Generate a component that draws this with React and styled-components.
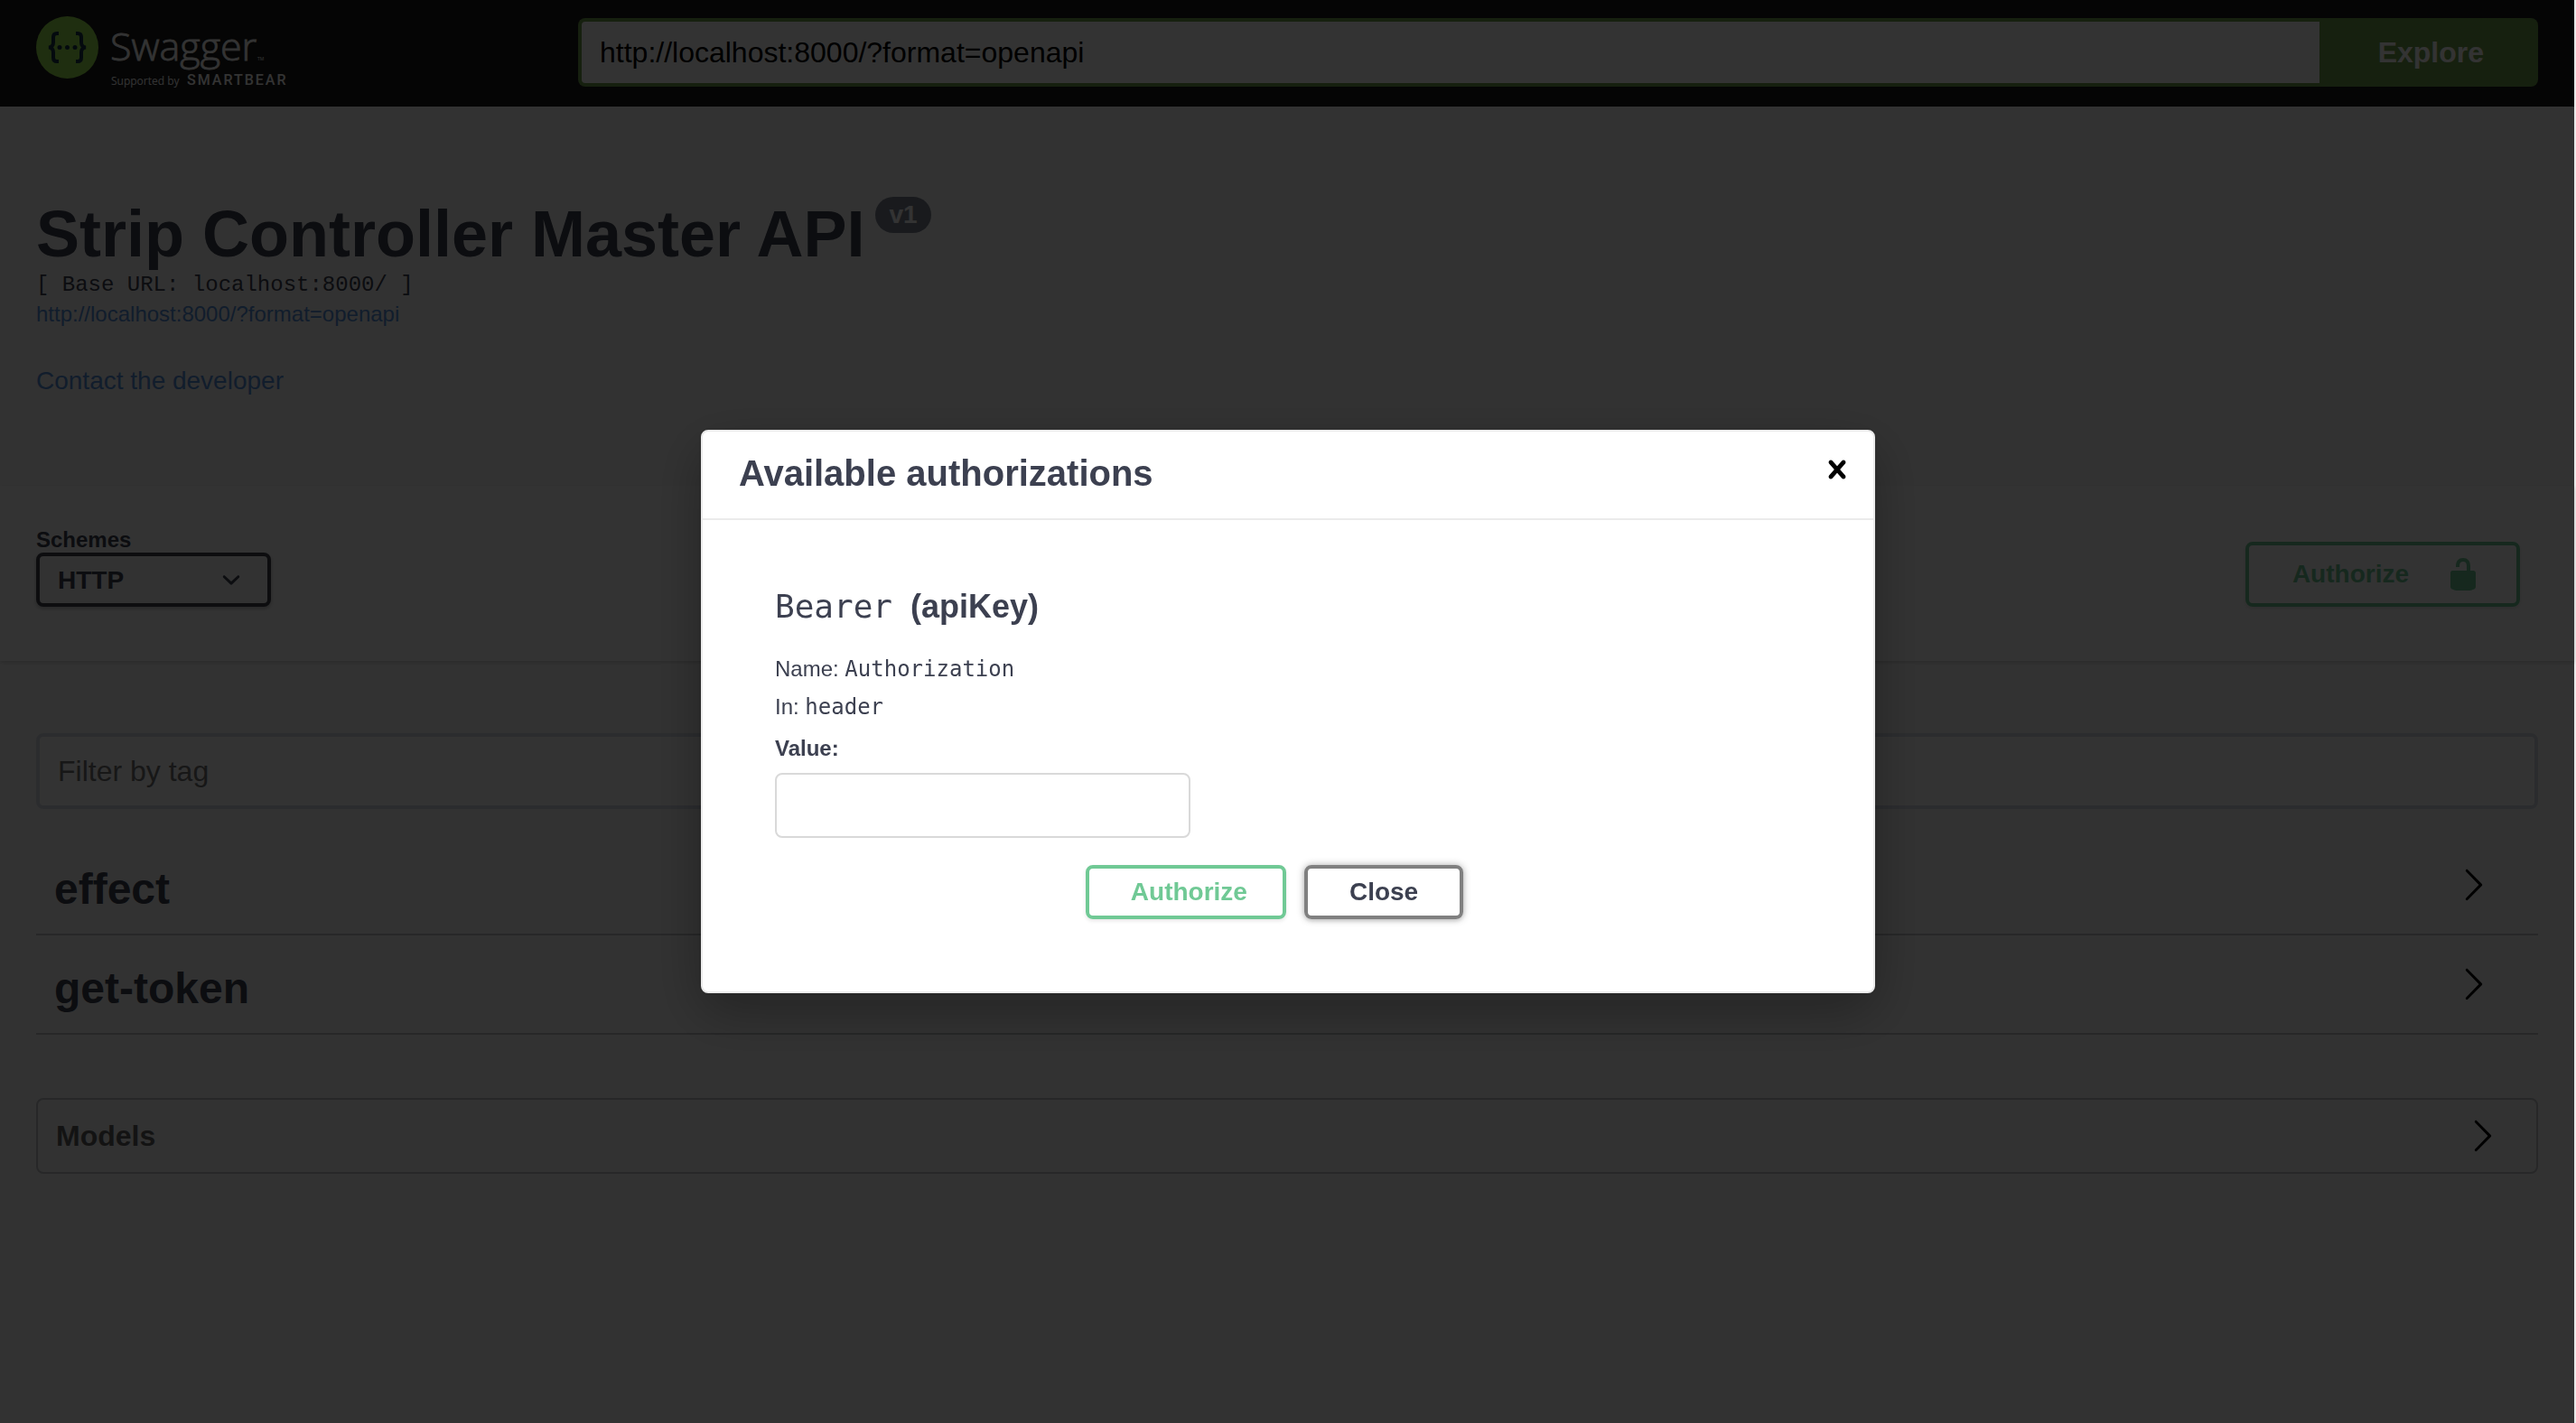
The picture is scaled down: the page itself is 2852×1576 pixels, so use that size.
import React from "react";
import styled, { createGlobalStyle, css } from "styled-components";

const ink = "#3c4050";
const green = "#70c995";
const leaf = "#719f4a";
const line = "rgba(59, 65, 81, 0.3)";
const sans = `"Liberation Sans", Arial, Helvetica, sans-serif`;
const courier = `"Liberation Mono", "Courier New", monospace`;
const mono = `"DejaVu Sans Mono", Menlo, monospace`;

const GlobalStyle = createGlobalStyle`
  *, *::before, *::after { box-sizing: border-box; }
  body { margin: 0; background: #fafafa; color: ${ink}; font-family: ${sans}; }
  h2, h3, h4, p { margin: 0; }
  button, input, select { font-family: inherit; margin: 0; }
`;

const Page = styled.div`
  min-height: 100vh;
  border-right: 2px solid #e8e8e8;
`;

const Topbar = styled.header`
  display: flex;
  justify-content: space-between;
  align-items: flex-start;
  padding: 20px 40px 22px;
  background: #1b1b1b;
`;

const LogoLink = styled.a`
  display: block;
  flex: 0 0 600px;
  height: 76px;
  svg { display: block; overflow: visible; }
`;

const UrlForm = styled.form`
  display: flex;
  flex: 1;
`;

const UrlInput = styled.input`
  flex: 1;
  min-width: 0;
  height: 76px;
  padding: 0 20px;
  border: 4px solid ${leaf};
  border-right: 0;
  border-radius: 8px 0 0 8px;
  background: #fff;
  color: #000;
  font-size: 32px;
`;

const ExploreButton = styled.button`
  height: 76px;
  padding: 0 60px 0 65px;
  border: 0;
  border-radius: 0 8px 8px 0;
  background: ${leaf};
  color: #fff;
  font-size: 32px;
  font-weight: 700;
`;

const Info = styled.section`
  display: flex;
  flex-direction: column;
  align-items: flex-start;
  padding: 100px 40px;
`;

const TitleRow = styled.div`
  display: flex;
  align-items: flex-start;
  gap: 12px;
`;

const Title = styled.h2`
  font-size: 72px;
  line-height: 82px;
`;

const Version = styled.span`
  padding: 0 15px;
  border-radius: 20px;
  background: #7d8492;
  color: #fff;
  font-size: 28px;
  font-weight: 700;
  line-height: 40px;
`;

const BaseUrl = styled.pre`
  margin: 0;
  font-family: ${courier};
  font-size: 24px;
  line-height: 32px;
`;

const TextLink = styled.a`
  color: #588fdb;
  font-size: ${(p) => p.$size}px;
  line-height: 32px;
  text-decoration: none;
`;

const Contact = styled.div`
  display: flex;
  margin-top: 42px;
`;

const SchemeBar = styled.section`
  display: flex;
  justify-content: space-between;
  align-items: flex-end;
  padding: 46px 60px 60px 40px;
  background: #fff;
  box-shadow: 0 2px 4px rgba(0, 0, 0, 0.15);
`;

const SchemeField = styled.div`
  display: flex;
  flex-direction: column;
`;

const SchemeLabel = styled.label`
  font-size: 24px;
  font-weight: 700;
  line-height: 28px;
`;

const SelectBox = styled.div`
  display: grid;
  align-items: center;
  width: 260px;
  > * { grid-area: 1 / 1; }
  svg { justify-self: end; margin-right: 24px; pointer-events: none; }
`;

const SchemeSelect = styled.select`
  appearance: none;
  height: 60px;
  padding: 0 60px 0 20px;
  border: 4px solid #41444e;
  border-radius: 8px;
  background: #f7f7f7;
  box-shadow: 0 2px 4px rgba(0, 0, 0, 0.25);
  color: ${ink};
  font-size: 28px;
  font-weight: 700;
`;

const Button = styled.button`
  display: flex;
  align-items: center;
  gap: 40px;
  height: ${(p) => (p.$tall ? 72 : 60)}px;
  padding: 0 39px 0 ${(p) => (p.$tall ? 48 : 46)}px;
  border: 4px solid ${green};
  border-radius: 8px;
  background: transparent;
  box-shadow: 0 2px 4px rgba(0, 0, 0, 0.1);
  color: ${green};
  font-size: 28px;
  font-weight: 700;
  ${(p) =>
    p.$neutral &&
    css`
      padding-right: 46px;
      border-color: #808080;
      color: ${ink};
      box-shadow: 0 2px 4px rgba(0, 0, 0, 0.1), 0 0 8px rgba(0, 0, 0, 0.3);
    `}
`;

const Main = styled.main`
  display: flex;
  flex-direction: column;
  padding: 80px 40px 0;
`;

const FilterInput = styled.input`
  width: 100%;
  height: 84px;
  margin-bottom: 40px;
  padding: 0 20px;
  border: 4px solid #d8dde7;
  border-radius: 8px;
  background: #fff;
  font-size: 32px;
  &::placeholder { color: #757575; opacity: 1; }
`;

const Tags = styled.div`
  display: flex;
  flex-direction: column;
  gap: 10px;
  margin-bottom: 70px;
`;

const TagHeader = styled.h3`
  display: flex;
  justify-content: space-between;
  align-items: center;
  padding: 20px 52px 20px 20px;
  border-bottom: 2px solid ${line};
  font-size: 48px;
  line-height: 58px;
`;

const ModelsHeader = styled.h4`
  display: flex;
  justify-content: space-between;
  align-items: center;
  height: 84px;
  padding: 0 40px 0 20px;
  border: 2px solid ${line};
  border-radius: 8px;
  color: #606060;
  font-size: 32px;
`;

const IconButton = styled.button`
  display: flex;
  padding: 0;
  border: 0;
  background: none;
  color: #000;
  margin-bottom: ${(p) => (p.$raised ? 10 : 0)}px;
`;

const Backdrop = styled.div`
  position: fixed;
  inset: 0 2px 0 0;
  background: rgba(0, 0, 0, 0.8);
`;

const DialogLayer = styled.div`
  position: fixed;
  inset: 0;
  display: flex;
  align-items: center;
  justify-content: center;
`;

const Dialog = styled.div`
  width: 1300px;
  max-width: 90%;
  border: 2px solid #ebebeb;
  border-radius: 8px;
  background: #fff;
  box-shadow: 0 20px 60px rgba(0, 0, 0, 0.3);
`;

const DialogHeader = styled.div`
  display: flex;
  justify-content: space-between;
  align-items: flex-start;
  padding: 22px 20px 26px 40px;
  border-bottom: 2px solid #ebebeb;
`;

const DialogTitle = styled.h3`
  font-size: 40px;
  line-height: 48px;
`;

const DialogBody = styled.form`
  padding: 74px 80px 80px;
`;

const AuthTitle = styled.h4`
  margin-bottom: 26px;
  font-size: 36px;
  line-height: 44px;
`;

const Code = styled.code`
  font-family: ${mono};
  font-size: inherit;
  font-weight: 400;
`;

const Row = styled.p`
  font-size: 24px;
  line-height: 42px;
`;

const ValueLabel = styled.label`
  display: block;
  margin: 4px 0 6px;
  font-size: 24px;
  font-weight: 700;
  line-height: 42px;
`;

const ValueInput = styled.input`
  display: block;
  width: 460px;
  height: 72px;
  padding: 0 20px;
  border: 2px solid #d9d9d9;
  border-radius: 8px;
  background: #fff;
  font-size: 28px;
`;

const Actions = styled.div`
  display: flex;
  justify-content: center;
  gap: 20px;
  margin-top: 30px;
  padding-right: 30px;
`;

const icons = {
  arrow:
    "M13.25 10L6.109 2.58c-.268-.27-.268-.707 0-.979.268-.27.701-.27.969 0l7.83 7.908c.268.271.268.709 0 .979l-7.83 7.908c-.268.271-.701.27-.969 0-.268-.269-.268-.707 0-.979L13.25 10z",
  unlocked:
    "M15.8 8H14V5.6C14 2.703 12.665 1 10 1 7.334 1 6 2.703 6 5.6V6h2v-.801C8 3.754 8.797 3 10 3c1.203 0 2 .754 2 2.199V8H4c-.553 0-1 .646-1 1.199V17c0 .549.428 1.139.951 1.307l1.197.387C5.672 18.861 6.55 19 7.1 19h5.8c.549 0 1.428-.139 1.951-.307l1.196-.387c.524-.167.953-.757.953-1.306V9.199C17 8.646 16.352 8 15.8 8z",
  close:
    "M14.348 14.849c-.469.469-1.229.469-1.697 0L10 11.819l-2.651 3.029c-.469.469-1.229.469-1.697 0-.469-.469-.469-1.229 0-1.697l2.758-3.15-2.759-3.152c-.469-.469-.469-1.228 0-1.697s1.228-.469 1.697 0L10 8.183l2.651-3.031c.469-.469 1.228-.469 1.697 0s.469 1.229 0 1.697l-2.758 3.152 2.758 3.15c.469.469.469 1.229 0 1.698z",
  chevron:
    "M13.418 7.859c.271-.268.709-.268.978 0 .27.268.272.701 0 .969l-3.908 3.83c-.27.268-.707.268-.979 0l-3.908-3.83c-.27-.267-.27-.701 0-.969.271-.268.709-.268.978 0L10 11l3.418-3.141z",
};

function Icon({ name }) {
  return (
    <svg width="40" height="40" viewBox="0 0 20 20" fill="currentColor" aria-hidden="true">
      <path d={icons[name]} />
    </svg>
  );
}

function Logo() {
  return (
    <svg width="290" height="76" viewBox="40 20 290 76" role="img" aria-label="Swagger, supported by SmartBear">
      <circle cx="74.500" cy="52.500" r="34.500" fill="#9de650" />
      <g fill="none" stroke="#173647" strokeWidth="4">
        <path d="M65 37h-2q-4 0-4 4v6q0 5-5 5.500q5 .5 5 5.500v6q0 4 4 4h2" />
        <path d="M84 37h2q4 0 4 4v6q0 5 5 5.500q-5 .5-5 5.500v6q0 4-4 4h-2" />
      </g>
      <g fill="#173647">
        <circle cx="66" cy="52.500" r="2.500" />
        <circle cx="74.500" cy="52.500" r="2.500" />
        <circle cx="83" cy="52.500" r="2.500" />
      </g>
      <g fill="#fff" fontFamily='"Open Sans", sans-serif'>
        <text x="122" y="67" fontSize="43" fontWeight="300" stroke="#fff" strokeWidth="0.8">Swagger</text>
        <text x="285" y="67" fontSize="5">TM</text>
        <text x="123" y="94" fontSize="12">Supported by</text>
        <text x="207" y="94" fontSize="16" fontWeight="500" fontFamily="Roboto, sans-serif" letterSpacing="2">SMARTBEAR</text>
      </g>
    </svg>
  );
}

const tags = ["effect", "get-token"];
const specUrl = "http://localhost:8000/?format=openapi";
const stay = (e) => e.preventDefault();

export default function App() {
  return (
    <>
      <GlobalStyle />
      <Page>
        <Topbar>
          <LogoLink href="#"><Logo /></LogoLink>
          <UrlForm onSubmit={stay}>
            <UrlInput type="text" aria-label="Definition URL" defaultValue={specUrl} />
            <ExploreButton type="submit">Explore</ExploreButton>
          </UrlForm>
        </Topbar>

        <Info>
          <TitleRow>
            <Title>Strip Controller Master API</Title>
            <Version>v1</Version>
          </TitleRow>
          <BaseUrl>[ Base URL: localhost:8000/ ]</BaseUrl>
          <TextLink $size={24} href="#">{specUrl}</TextLink>
          <Contact>
            <TextLink $size={28} href="#">Contact the developer</TextLink>
          </Contact>
        </Info>

        <SchemeBar>
          <SchemeField>
            <SchemeLabel htmlFor="schemes">Schemes</SchemeLabel>
            <SelectBox>
              <SchemeSelect id="schemes" defaultValue="http">
                <option value="http">HTTP</option>
              </SchemeSelect>
              <Icon name="chevron" />
            </SelectBox>
          </SchemeField>
          <Button type="button" $tall>
            Authorize
            <Icon name="unlocked" />
          </Button>
        </SchemeBar>

        <Main>
          <FilterInput type="text" placeholder="Filter by tag" aria-label="Filter by tag" />
          <Tags>
            {tags.map((tag) => (
              <TagHeader key={tag}>
                {tag}
                <IconButton type="button" $raised aria-label={`Expand ${tag}`}>
                  <Icon name="arrow" />
                </IconButton>
              </TagHeader>
            ))}
          </Tags>
          <ModelsHeader>
            Models
            <IconButton type="button" aria-label="Expand models">
              <Icon name="arrow" />
            </IconButton>
          </ModelsHeader>
        </Main>
      </Page>

      <Backdrop />
      <DialogLayer>
        <Dialog role="dialog" aria-modal="true" aria-labelledby="auth-title">
          <DialogHeader>
            <DialogTitle id="auth-title">Available authorizations</DialogTitle>
            <IconButton type="button" aria-label="Close dialog">
              <Icon name="close" />
            </IconButton>
          </DialogHeader>
          <DialogBody onSubmit={stay}>
            <AuthTitle><Code>Bearer</Code>&nbsp; (apiKey)</AuthTitle>
            <Row>Name: <Code>Authorization</Code></Row>
            <Row>In: <Code>header</Code></Row>
            <ValueLabel htmlFor="auth-value">Value:</ValueLabel>
            <ValueInput id="auth-value" type="text" />
            <Actions>
              <Button type="submit">Authorize</Button>
              <Button type="button" $neutral>Close</Button>
            </Actions>
          </DialogBody>
        </Dialog>
      </DialogLayer>
    </>
  );
}
